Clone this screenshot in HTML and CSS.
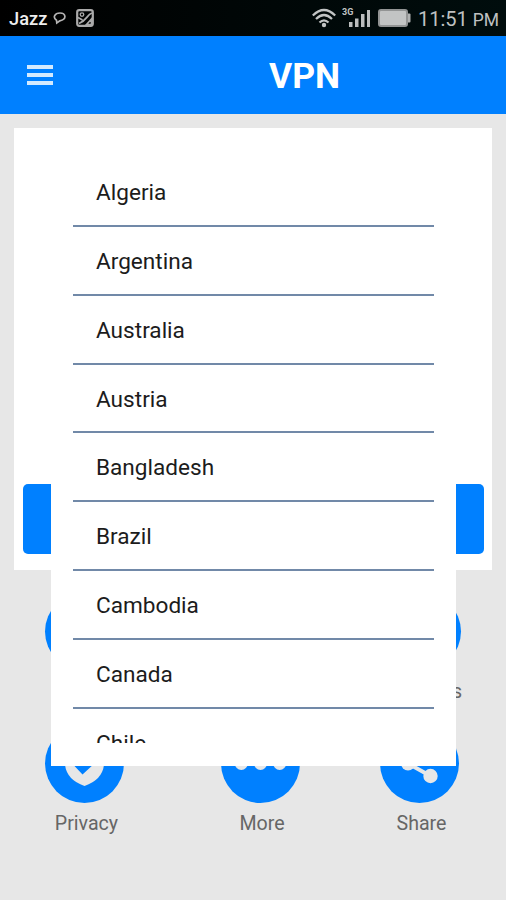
FILE: index.html
```html
<!DOCTYPE html>
<html lang="en">
<head>
<meta charset="utf-8">
<title>VPN</title>
<link rel="stylesheet" href="styles.css">
</head>
<body>
<div class="screen">
  <header class="status">
    <span class="carrier">Jazz</span>
    <svg class="chat" width="14" height="14" viewBox="0 0 14 14"><path d="M3.500 9.200C-.5 6.500 1.500 2 7 2s7.500 6-.2 7.800L3.800 12z" fill="none" stroke="#b4b4b4" stroke-width="1.700"/></svg>
    <svg class="photo" width="18" height="18" viewBox="0 0 18 18"><rect x="1.200" y="1.200" width="15.600" height="15.600" rx="2" fill="none" stroke="#aaa" stroke-width="2.200"/><circle cx="6" cy="5.600" r="1.800" fill="none" stroke="#aaa" stroke-width="1.300"/><path d="M16 4C10.500 6 11.500 11 3 14.500M2 8.500l4.500 2.500M10.500 15.500l5-5.500v5.500z" fill="none" stroke="#aaa" stroke-width="1.700"/></svg>
    <span class="spacer"></span>
    <svg class="wifi" width="24" height="20" viewBox="0 0 24 20"><g fill="none" stroke="#c2c4c4" stroke-width="2.200"><path d="M.8 7.500Q12-3.500 23.200 7.500M4 11Q12 3 20 11M7.500 14.500Q12 10 16.500 14.500"/></g><circle cx="12" cy="17" r="2.200" fill="#c2c4c4"/></svg>
    <svg class="signal" width="29" height="22" viewBox="0 0 29 22"><text x="0" y="8.500" class="net">3G</text><path d="M7 16h3.500v5H7zM13 12.500h3.500V21H13zM19 8h3.500v13H19zM25 4h3v17h-3z" fill="#bbbdbd"/></svg>
    <svg class="battery" width="33" height="18" viewBox="0 0 33 18"><rect x="1" y="1" width="28" height="16" rx="2" fill="#c2c4c4" stroke="#929494" stroke-width="2"/><path d="M30 4.500h1.500q1 0 1 1v7q0 1-1 1H30z" fill="#b0b2b2"/></svg>
    <span class="clock">11:51 <small>PM</small></span>
  </header>
  <nav class="appbar">
    <div class="menu"><i></i><i></i><i></i></div>
    <h1>VPN</h1>
  </nav>
  <main class="card"><div class="connect"></div></main>
  <section class="actions">
    <div class="action"><div class="disc"></div><span></span></div>
    <div class="action"><div class="disc"></div><span></span></div>
    <div class="action wide"><div class="disc"></div><span class="tail">s</span></div>
    <div class="action">
      <svg class="disc" viewBox="0 0 79 79"><path d="M39.500 14L59 22V41Q57 56 39.500 62 22 56 20 41V22z" fill="#e7e7e7"/><path d="M21 33l7-7 9.500 9.500L55 21l7 7-24.500 22.500z" fill="#0080ff"/></svg>
      <span>Privacy</span>
    </div>
    <div class="action">
      <svg class="disc" viewBox="0 0 79 79"><g fill="#e7e7e7"><circle cx="20.300" cy="39.500" r="6.500"/><circle cx="39.500" cy="39.500" r="6.500"/><circle cx="58.700" cy="39.500" r="6.500"/></g></svg>
      <span>More</span>
    </div>
    <div class="action">
      <svg class="disc" viewBox="0 0 79 79"><path d="M50.500 26L28 39.500l22.500 12.500" fill="none" stroke="#e7e7e7" stroke-width="4"/><g fill="#e7e7e7"><circle cx="50.500" cy="26" r="7"/><circle cx="28" cy="39.500" r="7"/><circle cx="50.500" cy="52" r="7.200"/></g></svg>
      <span>Share</span>
    </div>
  </section>
  <div class="dialog">
    <ul class="countries">
      <li>Algeria</li>
      <li>Argentina</li>
      <li>Australia</li>
      <li>Austria</li>
      <li>Bangladesh</li>
      <li>Brazil</li>
      <li>Cambodia</li>
      <li>Canada</li>
      <li>Chile</li>
    </ul>
  </div>
</div>
</body>
</html>
```
FILE: styles.css
```css
* { box-sizing: border-box; }
body { margin: 0; font-family: Roboto, "Liberation Sans", sans-serif; }
.screen { position: relative; width: 506px; height: 900px; overflow: hidden; background: #e7e7e7; }

.status { display: flex; align-items: center; height: 36px; padding: 0 8px 0 9px; background: linear-gradient(90deg, #000, #000d0d); color: #bfc1c1; }
.carrier { margin-top: 1px; font-size: 18.3px; font-weight: 500; color: #eee; width: 43px; white-space: nowrap; }
.chat { margin-left: 1px; }
.photo { margin-left: 9px; }
.spacer { flex: 1; }
.wifi { margin: -1px -1px 0 0; }
.signal { margin: -3px 0 0 7px; }
.net { font: 700 9px Roboto, sans-serif; fill: #c2c4c4; }
.battery { margin-left: 7px; }
.clock { width: 80px; margin: 2px 0 0 7px; font-size: 20px; white-space: nowrap; }
.clock small { font-size: 17.5px; }

.appbar { display: flex; align-items: center; height: 78px; padding-left: 27px; background: #0080ff; }
.menu { display: grid; gap: 4px; width: 26px; margin-top: -1px; }
.menu i { height: 4px; background: #d3eaff; }
h1 { margin: 2px 0 0 216px; font-size: 35.5px; line-height: 42px; font-weight: 700; color: #fff; }

.card { height: 442px; margin: 14px 14px 0; padding: 356px 8px 0 9px; background: #fff; }
.connect { height: 70px; border-radius: 5px; background: #0080ff; }

.actions { display: grid; grid-template-columns: 79px 79px 79px; justify-content: space-between; grid-auto-rows: 132px; padding: 22px 47px 0 45px; }
.action { display: flex; flex-direction: column; align-items: center; }
.action:nth-child(3n + 2) { margin-left: 8px; margin-right: -8px; }
.disc { flex: none; width: 79px; height: 79px; border-radius: 50%; background: #0080ff; }
.action span { margin: 9px -4px 0 0; font-size: 19.6px; line-height: 24px; color: #666; }
.wide { margin-left: 2px; margin-right: -2px; }
.action .tail { align-self: flex-end; margin-right: -1px; }

.dialog { position: absolute; left: 51px; top: 129px; width: 405px; height: 637px; padding: 29px 22px 23px; background: #fff; }
.countries { height: 585px; margin: 0; padding: 0; overflow: hidden; list-style: none; }
.countries li { height: 68.87px; padding: 0 0 0 23px; border-bottom: 2px solid #7189a8; font-size: 22.6px; line-height: 69px; color: #1c1c1c; }
```
